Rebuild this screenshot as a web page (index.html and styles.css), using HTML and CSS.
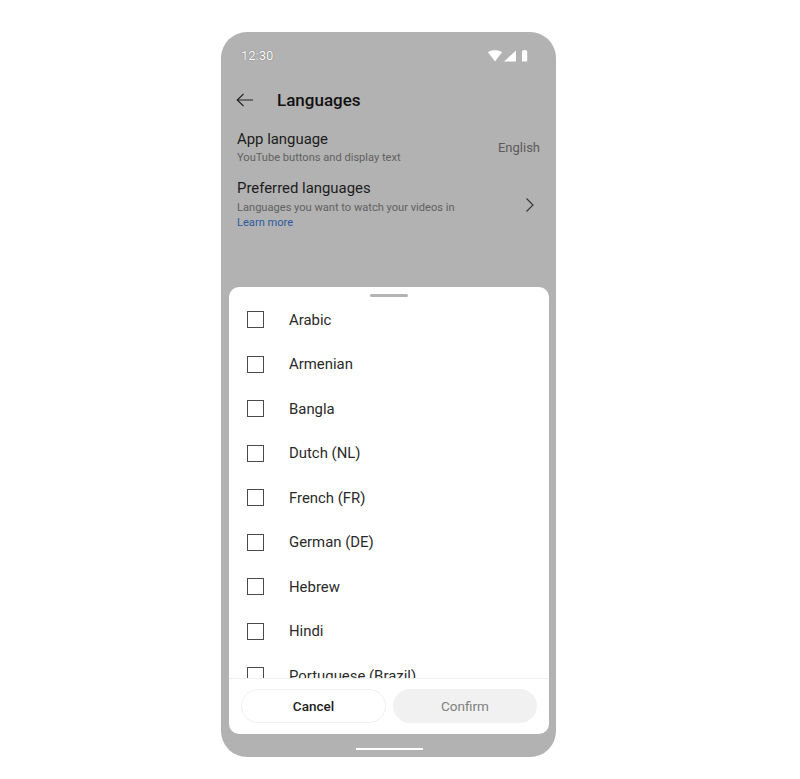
FILE: index.html
```html
<!DOCTYPE html>
<html lang="en">
<head>
<meta charset="utf-8">
<title>Languages</title>
<link rel="stylesheet" href="styles.css">
</head>
<body>
<div class="phone">
  <div class="status">
    <span class="time">12:30</span>
    <svg class="status-icons" width="42" height="14" viewBox="0 0 42 14">
      <path d="M0 3.200C3.800.6 10.200.6 14 3.200L7 12.500z" fill="#fff"/>
      <path d="M16 12.500 28 1.500v11z" fill="#fff"/>
      <path d="M34 2.500a1 1 0 0 1 1-1h.8V1h2v.5h.4a1 1 0 0 1 1 1v10H34z" fill="#fff"/>
    </svg>
  </div>
  <header class="topbar">
    <svg class="back" width="18" height="14" viewBox="0 0 18 14"><path d="M17 7H1.200M7.500 1 1.200 7l6.300 6" fill="none" stroke="#222" stroke-width="1.100"/></svg>
    <h1 class="title">Languages</h1>
  </header>
  <section class="setting setting-app">
    <div class="setting-text">
      <div class="setting-name">App language</div>
      <div class="setting-sub">YouTube buttons and display text</div>
    </div>
    <span class="setting-value">English</span>
  </section>
  <section class="setting setting-pref">
    <div class="setting-text">
      <div class="setting-name">Preferred languages</div>
      <div class="setting-sub">Languages you want to watch your videos in</div>
      <a class="learn" href="#">Learn more</a>
    </div>
    <svg class="chevron" width="10" height="16" viewBox="0 0 10 16"><path d="m1.500 1.500 6.500 6.500-6.500 6.500" fill="none" stroke="#333" stroke-width="1.100"/></svg>
  </section>
  <div class="sheet">
    <div class="handle"></div>
    <ul class="list">
      <li class="row"><span class="box"></span><span>Arabic</span></li>
      <li class="row"><span class="box"></span><span>Armenian</span></li>
      <li class="row"><span class="box"></span><span>Bangla</span></li>
      <li class="row"><span class="box"></span><span>Dutch (NL)</span></li>
      <li class="row"><span class="box"></span><span>French (FR)</span></li>
      <li class="row"><span class="box"></span><span>German (DE)</span></li>
      <li class="row"><span class="box"></span><span>Hebrew</span></li>
      <li class="row"><span class="box"></span><span>Hindi</span></li>
      <li class="row"><span class="box"></span><span>Portuguese (Brazil)</span></li>
    </ul>
    <footer class="actions">
      <button class="btn cancel">Cancel</button>
      <button class="btn confirm">Confirm</button>
    </footer>
  </div>
  <div class="home"></div>
</div>
</body>
</html>
```
FILE: styles.css
```css
* { box-sizing: border-box; }
html, body { margin: 0; height: 779px; overflow: hidden; background: #fff; }
body {
  padding: 32px 0 0 221px;
  font-family: Roboto, "Liberation Sans", sans-serif;
  color: #222;
}
.phone {
  width: 335px;
  height: 725px;
  background: #b2b2b2;
  border-radius: 26px;
  display: flex;
  flex-direction: column;
}
.status {
  height: 17px;
  margin: 15px 26px 0 20px;
  display: flex;
  justify-content: space-between;
  align-items: center;
}
.time {
  font-size: 13px;
  color: #fff;
  text-shadow: 0 0 1px #444;
}
.status-icons { margin-right: 0; }
.topbar {
  display: flex;
  align-items: center;
  gap: 23px;
  margin: 21px 0 0 15px;
  height: 30px;
}
.title { margin: 0; font-size: 17px; font-weight: 500; color: #111; }
.setting {
  display: flex;
  justify-content: space-between;
  align-items: center;
  padding: 0 16px;
}
.setting-app { margin-top: 15px; }
.setting-app .setting-sub { margin-top: 1px; }
.setting-pref { margin-top: 14px; padding-right: 21px; }
.setting-name { font-size: 14.900px; line-height: 19px; color: #1c1c1c; }
.setting-sub { font-size: 11.100px; line-height: 15px; margin-top: 2px; color: #616161; }
.setting-value { font-size: 13px; color: #5c5c5c; }
.learn { display: block; font-size: 11.100px; line-height: 15px; color: #2c5a9e; text-decoration: none; }
.sheet {
  margin: 57px 7px 0 8px;
  height: 447px;
  background: #fff;
  border-radius: 10px;
  display: flex;
  flex-direction: column;
  overflow: hidden;
}
.handle {
  flex: none;
  width: 38px;
  height: 3px;
  margin: 7px auto 0;
  border-radius: 2px;
  background: #b4b4b4;
}
.list {
  list-style: none;
  margin: 0;
  padding: 0.500px 0 0;
  flex: 1;
  min-height: 0;
  overflow: hidden;
}
.row {
  height: 44.500px;
  display: flex;
  align-items: center;
  gap: 25px;
  padding-left: 18px;
  font-size: 14.900px;
  color: #2a2a2a;
}
.box {
  flex: none;
  width: 17px;
  height: 17px;
  border: 1.500px solid #4a4a4a;
}
.actions {
  flex: none;
  height: 56px;
  border-top: 1px solid #efefef;
  display: flex;
  justify-content: space-between;
  padding: 10px 12px 0 12px;
}
.btn {
  width: 145px;
  height: 34px;
  border-radius: 17px;
  font-family: inherit;
  font-size: 13.500px;
  font-weight: 500;
  padding: 0 0 1px;
}
.cancel { background: #fff; border: 1px solid #efefef; color: #1c1c1c; }
.confirm { width: 144px; background: #f1f1f1; border: 0; color: #808080; font-weight: 400; }
.home {
  width: 67px;
  height: 2px;
  margin: 14px 0 0 135px;
  background: #fff;
}
```
